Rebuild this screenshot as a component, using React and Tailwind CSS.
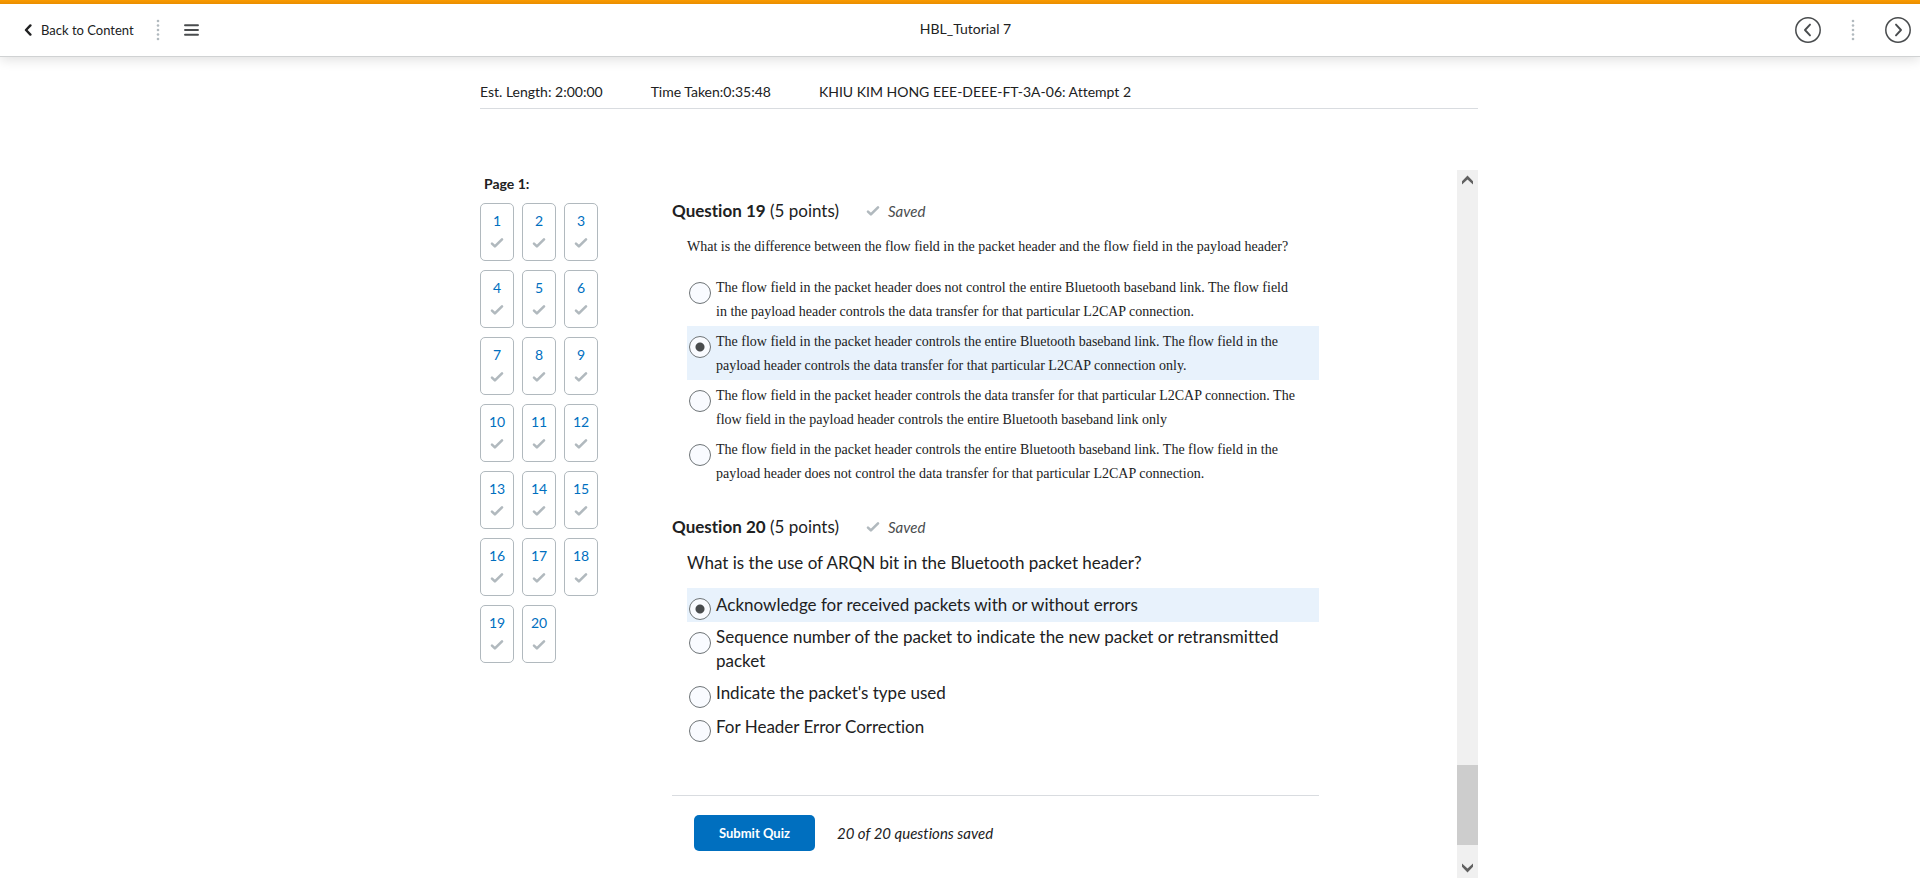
import React from "react";

const QUESTIONS = [
  {
    id: 19,
    serif: true,
    prompt:
      "What is the difference between the flow field in the packet header and the flow field in the payload header?",
    selected: 1,
    options: [
      "The flow field in the packet header does not control the entire Bluetooth baseband link. The flow field in the payload header controls the data transfer for that particular L2CAP connection.",
      "The flow field in the packet header controls the entire Bluetooth baseband link. The flow field in the payload header controls the data transfer for that particular L2CAP connection only.",
      "The flow field in the packet header controls the data transfer for that particular L2CAP connection. The flow field in the payload header controls the entire Bluetooth baseband link only",
      "The flow field in the packet header controls the entire Bluetooth baseband link. The flow field in the payload header does not control the data transfer for that particular L2CAP connection.",
    ],
  },
  {
    id: 20,
    serif: false,
    prompt: "What is the use of ARQN bit in the Bluetooth packet header?",
    selected: 0,
    options: [
      "Acknowledge for received packets with or without errors",
      "Sequence number of the packet to indicate the new packet or retransmitted packet",
      "Indicate the packet's type used",
      "For Header Error Correction",
    ],
  },
];

const NUMBERS = Array.from({ length: 20 }, (_, i) => i + 1);

function Check() {
  return (
    <svg width="14" height="12" viewBox="0 0 14 12" fill="none" stroke="#b1b9be" strokeWidth="2.6" strokeLinecap="round" strokeLinejoin="round" aria-hidden="true">
      <path d="M2 6.6 4.9 9.4 12 2.3" />
    </svg>
  );
}

function Dots() {
  return (
    <svg width="4" height="22" viewBox="0 0 4 22" fill="#b1b9be" aria-hidden="true">
      {[2, 6.5, 11, 15.5, 20].map((y) => (
        <circle key={y} cx="2" cy={y} r="1.3" />
      ))}
    </svg>
  );
}

function RoundArrow({ label, d }) {
  return (
    <button type="button" aria-label={label} className="size-[26px]">
      <svg width="26" height="26" viewBox="0 0 26 26" fill="none" stroke="#494c4e" strokeLinecap="round" strokeLinejoin="round">
        <circle cx="13" cy="13" r="12.2" strokeWidth="1.5" />
        <path d={d} strokeWidth="1.9" />
      </svg>
    </button>
  );
}

function Question({ q }) {
  const name = `question-${q.id}`;
  return (
    <section aria-labelledby={`${name}-title`}>
      <div className="flex items-center">
        <h2 id={`${name}-title`} className="text-[17px] leading-6">
          <span className="font-bold">Question {q.id}</span> (5 points)
        </h2>
        <span className="ml-[27px] flex items-center gap-2 text-[15px] leading-6 italic text-[#494c4e]">
          <Check />
          Saved
        </span>
      </div>
      <fieldset className="pl-[15px]">
        <legend className={q.serif ? "pt-3 font-['Liberation_Serif',serif] text-[14px] leading-6" : "pt-3 text-[17px] leading-6"}>
          {q.prompt}
        </legend>
        <div className={q.serif ? "mt-[13px] font-['Liberation_Serif',serif] text-[14px] leading-6" : "mt-[13px] text-[17px] leading-6"}>
          {q.options.map((text, i) => (
            <label key={text} className="flex gap-[5px] pr-5 pl-0.5 has-[:checked]:bg-[#e8f2fc]">
              <input
                type="radio"
                name={name}
                defaultChecked={i === q.selected}
                className="mt-2.5 size-[22px] shrink-0 appearance-none rounded-full border border-[#6e7477] bg-[#f9fbff] checked:bg-[radial-gradient(circle,#494c4e_4px,#f9fbff_5px)]"
              />
              <span className={q.serif ? "min-h-[34px] pt-1 pb-0.5" : "flex min-h-[34px] items-center py-[3px]"}>{text}</span>
            </label>
          ))}
        </div>
      </fieldset>
    </section>
  );
}

export default function App() {
  return (
    <div className="min-h-screen bg-white font-['Lato',sans-serif] text-[#202122] [font-variant-ligatures:none]">
      <header className="border-b border-[#d0d2d3] bg-white shadow-[0_2px_12px_rgba(0,0,0,0.14)]">
        <div className="h-1 bg-linear-to-b from-[#f99a00] to-[#ea8e00]" />
        <div className="flex h-[52px] items-center">
          <div className="flex w-[211px] items-center pl-6">
            <a href="#content" className="flex items-center gap-[9px] text-[13px] leading-5">
              <svg width="8" height="12" viewBox="0 0 8 12" fill="none" stroke="#202122" strokeWidth="2.4" strokeLinecap="round" strokeLinejoin="round" aria-hidden="true">
                <path d="M6.4 1.4 2 6l4.4 4.6" />
              </svg>
              Back to Content
            </a>
            <span className="ml-[22px] flex"><Dots /></span>
            <button type="button" aria-label="Menu" className="ml-6">
              <svg width="15" height="12" viewBox="0 0 15 12" stroke="#494c4e" strokeWidth="1.9" strokeLinecap="round" aria-hidden="true">
                <path d="M1 1.2h13M1 6h13M1 10.8h13" />
              </svg>
            </button>
          </div>
          <h1 className="flex-1 pb-0.5 text-center text-[14px] leading-5">HBL_Tutorial 7</h1>
          <nav aria-label="Topics" className="flex w-[200px] items-center justify-end gap-[30px] pr-[9px]">
            <RoundArrow label="Previous" d="M15 7.6 10 13l5 5.4" />
            <Dots />
            <RoundArrow label="Next" d="M11 7.6 16 13l-5 5.4" />
          </nav>
        </div>
      </header>

      <div className="ml-[25%] w-[52%] pt-[25px]">
        <div className="flex gap-12 border-b border-[#d9dce0] pb-1.5 text-[14px] leading-5">
          <span>Est. Length: 2:00:00</span>
          <span>Time Taken:0:35:48</span>
          <span>KHIU KIM HONG EEE-DEEE-FT-3A-06: Attempt 2</span>
        </div>

        <div className="mt-[61px] flex">
          <aside className="w-48 shrink-0 pt-1">
            <h2 className="pl-1 text-[14px] leading-5 font-bold">Page 1:</h2>
            <nav aria-label="Questions" className="mt-[9px] grid w-[118px] grid-cols-3 gap-x-2 gap-y-[9px]">
              {NUMBERS.map((n) => (
                <a
                  key={n}
                  href={`#question-${n}`}
                  className="flex h-[58px] flex-col items-center gap-1.5 rounded-[5px] border border-[#b1b9be] pt-[7px] text-[14px] leading-5 text-[#006fbf]"
                >
                  {n}
                  <Check />
                </a>
              ))}
            </nav>
          </aside>

          <main className="mr-[138px] min-w-0 flex-1 pt-[29px]">
            <Question q={QUESTIONS[0]} />
            <div className="h-[27px]" />
            <Question q={QUESTIONS[1]} />
            <div className="mt-[51px] flex items-center gap-[22px] border-t border-[#d9dce0] pt-[19px] pb-[27px] pl-[22px]">
              <button type="button" className="h-9 rounded-[5px] bg-[#006fbf] px-[25px] text-[13px] leading-5 font-bold text-white">
                Submit Quiz
              </button>
              <span className="text-[15px] leading-5 italic">20 of 20 questions saved</span>
            </div>
          </main>

          <div className="flex w-[21px] shrink-0 flex-col items-center bg-[#f0f0f0]" aria-hidden="true">
            <svg className="mt-[5px]" width="11" height="10" viewBox="0 0 11 10" fill="#606060">
              <path d="M5.5 0.6 11 6.2V9.4L5.5 4.4 0 9.4V6.2Z" />
            </svg>
            <div className="flex-1" />
            <div className="h-20 w-full bg-[#cdcdcd]" />
            <svg className="mt-[18px] mb-[5px]" width="11" height="10" viewBox="0 0 11 10" fill="#606060">
              <path d="M5.5 9.4 11 3.8V0.6L5.5 5.6 0 0.6V3.8Z" />
            </svg>
          </div>
        </div>
      </div>
    </div>
  );
}
